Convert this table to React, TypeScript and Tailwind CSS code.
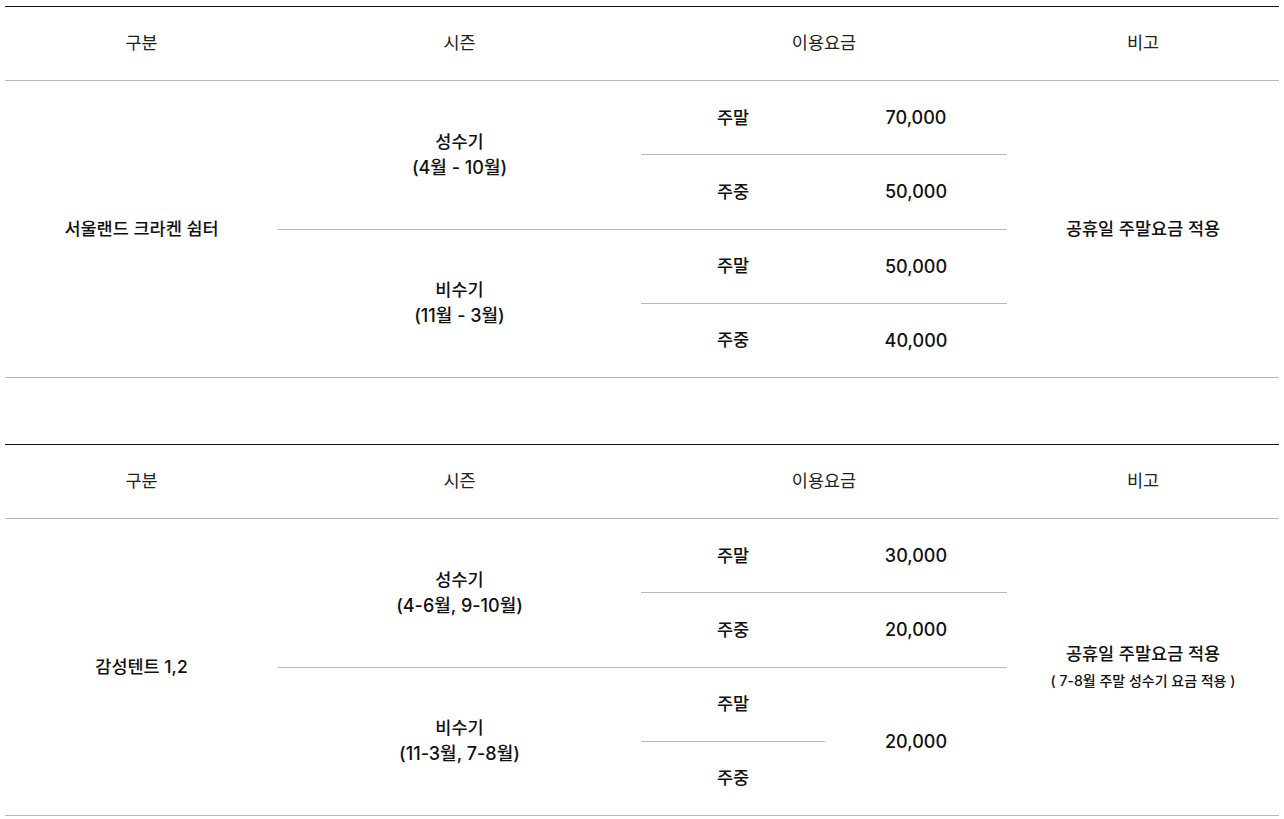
import React from 'react'

interface PriceRow {
  day: string
  price: string | null
  priceSpan?: number
}

interface Season {
  name: string
  period: string
  rows: PriceRow[]
}

interface Facility {
  name: string
  seasons: Season[]
  note: string
  subNote?: string
}

const facilities: Facility[] = [
  {
    name: '서울랜드 크라켄 쉼터',
    note: '공휴일 주말요금 적용',
    seasons: [
      {
        name: '성수기',
        period: '(4월 - 10월)',
        rows: [
          { day: '주말', price: '70,000' },
          { day: '주중', price: '50,000' },
        ],
      },
      {
        name: '비수기',
        period: '(11월 - 3월)',
        rows: [
          { day: '주말', price: '50,000' },
          { day: '주중', price: '40,000' },
        ],
      },
    ],
  },
  {
    name: '감성텐트 1,2',
    note: '공휴일 주말요금 적용',
    subNote: '( 7-8월 주말 성수기 요금 적용 )',
    seasons: [
      {
        name: '성수기',
        period: '(4-6월, 9-10월)',
        rows: [
          { day: '주말', price: '30,000' },
          { day: '주중', price: '20,000' },
        ],
      },
      {
        name: '비수기',
        period: '(11-3월, 7-8월)',
        rows: [
          { day: '주말', price: '20,000', priceSpan: 2 },
          { day: '주중', price: null },
        ],
      },
    ],
  },
]

const font = { fontFamily: "Inter, 'Noto Sans CJK KR', sans-serif" }

function PriceTable({ facility }: { facility: Facility }) {
  const totalRows = facility.seasons.reduce((n, s) => n + s.rows.length, 0)

  return (
    <table className="w-full table-fixed border-collapse border-t border-t-[#111]">
      <colgroup>
        <col className="w-[273px]" />
        <col className="w-[363px]" />
        <col className="w-[184px]" />
        <col className="w-[182px]" />
        <col />
      </colgroup>
      <thead>
        <tr className="h-[74px] border-b border-b-[#b9b9b9] text-[17.5px] text-[#222]">
          <th className="font-normal">구분</th>
          <th className="font-normal">시즌</th>
          <th colSpan={2} className="font-normal">이용요금</th>
          <th className="font-normal">비고</th>
        </tr>
      </thead>
      <tbody className="text-[17.5px] font-medium text-[#111]">
        {facility.seasons.map((season, si) =>
          season.rows.map((row, ri) => (
            <tr key={`${si}-${ri}`} className="h-[74.25px]">
              {si === 0 && ri === 0 && (
                <td rowSpan={totalRows} className="border-b border-b-[#b9b9b9] text-center">
                  {facility.name}
                </td>
              )}
              {ri === 0 && (
                <td
                  rowSpan={season.rows.length}
                  className="border-b border-b-[#b9b9b9] text-center leading-[26px]"
                >
                  <div>{season.name}</div>
                  <div className="text-[18px]">{season.period}</div>
                </td>
              )}
              <td className="border-b border-b-[#b9b9b9] text-center">{row.day}</td>
              {row.price !== null && (
                <td
                  rowSpan={row.priceSpan ?? 1}
                  className="border-b border-b-[#b9b9b9] text-center text-[18px]"
                >
                  {row.price}
                </td>
              )}
              {si === 0 && ri === 0 && (
                <td rowSpan={totalRows} className="border-b border-b-[#b9b9b9] text-center">
                  <div className="leading-[28px]">{facility.note}</div>
                  {facility.subNote && (
                    <div className="text-[14px] leading-[26px]">{facility.subNote}</div>
                  )}
                </td>
              )}
            </tr>
          ))
        )}
      </tbody>
    </table>
  )
}

export default function App() {
  return (
    <div className="min-h-screen bg-white px-[5px] pt-[6px]" style={font}>
      <div className="w-[1274px] space-y-[66px]">
        {facilities.map((f) => (
          <PriceTable key={f.name} facility={f} />
        ))}
      </div>
    </div>
  )
}
